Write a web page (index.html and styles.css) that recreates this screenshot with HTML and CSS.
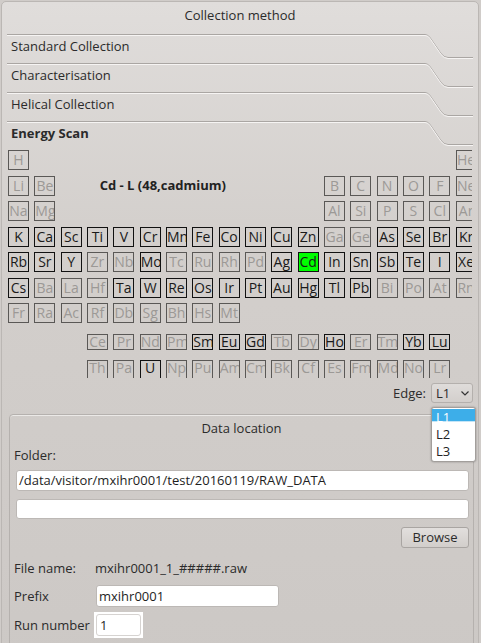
FILE: index.html
```html
<!DOCTYPE html>
<html>
<head>
<meta charset="utf-8">
<link rel="stylesheet" href="styles.css">
</head>
<body>
<div class="frame">
  <div class="frame-title">Collection method</div>

  <div class="tb-head">
    <svg class="tab-line" width="466" height="26" viewBox="0 0 466 26"><path class="tl-dark" d="M0 0.5 H418 Q421 0.5 423 3.5 L434 19.5 Q437 23.5 441 23.5 H466"/><path class="tl-light" d="M0 1.5 H418 Q421 1.5 423 4.5 L434 20.5 Q437 24.5 441 24.5 H466"/></svg>
    <span>Standard Collection</span>
  </div>
  <div class="tb-head">
    <svg class="tab-line" width="466" height="26" viewBox="0 0 466 26"><path class="tl-dark" d="M0 0.5 H418 Q421 0.5 423 3.5 L434 19.5 Q437 23.5 441 23.5 H466"/><path class="tl-light" d="M0 1.5 H418 Q421 1.5 423 4.5 L434 20.5 Q437 24.5 441 24.5 H466"/></svg>
    <span>Characterisation</span>
  </div>
  <div class="tb-head">
    <svg class="tab-line" width="466" height="26" viewBox="0 0 466 26"><path class="tl-dark" d="M0 0.5 H418 Q421 0.5 423 3.5 L434 19.5 Q437 23.5 441 23.5 H466"/><path class="tl-light" d="M0 1.5 H418 Q421 1.5 423 4.5 L434 20.5 Q437 24.5 441 24.5 H466"/></svg>
    <span>Helical Collection</span>
  </div>
  <div class="tb-head current">
    <svg class="tab-line" width="466" height="26" viewBox="0 0 466 26"><path class="tl-dark" d="M0 0.5 H418 Q421 0.5 423 3.5 L434 19.5 Q437 23.5 441 23.5 H466"/><path class="tl-light" d="M0 1.5 H418 Q421 1.5 423 4.5 L434 20.5 Q437 24.5 441 24.5 H466"/></svg>
    <span>Energy Scan</span>
  </div>

  <div class="page">
    <div class="ptable">
      <div class="el off">H</div>
      <div class="el off c18">He</div>

      <div class="el off">Li</div>
      <div class="el off">Be</div>
      <div class="info">Cd - L (48,cadmium)</div>
      <div class="el off">B</div>
      <div class="el off">C</div>
      <div class="el off">N</div>
      <div class="el off">O</div>
      <div class="el off">F</div>
      <div class="el off">Ne</div>

      <div class="el off">Na</div>
      <div class="el off">Mg</div>
      <div class="el off c13">Al</div>
      <div class="el off">Si</div>
      <div class="el off">P</div>
      <div class="el off">S</div>
      <div class="el off">Cl</div>
      <div class="el off">Ar</div>

      <div class="el">K</div>
      <div class="el">Ca</div>
      <div class="el">Sc</div>
      <div class="el">Ti</div>
      <div class="el">V</div>
      <div class="el">Cr</div>
      <div class="el">Mn</div>
      <div class="el">Fe</div>
      <div class="el">Co</div>
      <div class="el">Ni</div>
      <div class="el">Cu</div>
      <div class="el">Zn</div>
      <div class="el off">Ga</div>
      <div class="el off">Ge</div>
      <div class="el">As</div>
      <div class="el">Se</div>
      <div class="el">Br</div>
      <div class="el">Kr</div>

      <div class="el">Rb</div>
      <div class="el">Sr</div>
      <div class="el">Y</div>
      <div class="el off">Zr</div>
      <div class="el off">Nb</div>
      <div class="el">Mo</div>
      <div class="el off">Tc</div>
      <div class="el off">Ru</div>
      <div class="el off">Rh</div>
      <div class="el off">Pd</div>
      <div class="el">Ag</div>
      <div class="el sel">Cd</div>
      <div class="el">In</div>
      <div class="el">Sn</div>
      <div class="el">Sb</div>
      <div class="el">Te</div>
      <div class="el">I</div>
      <div class="el">Xe</div>

      <div class="el">Cs</div>
      <div class="el off">Ba</div>
      <div class="el off">La</div>
      <div class="el off">Hf</div>
      <div class="el">Ta</div>
      <div class="el">W</div>
      <div class="el">Re</div>
      <div class="el">Os</div>
      <div class="el">Ir</div>
      <div class="el">Pt</div>
      <div class="el">Au</div>
      <div class="el">Hg</div>
      <div class="el">Tl</div>
      <div class="el">Pb</div>
      <div class="el off">Bi</div>
      <div class="el off">Po</div>
      <div class="el off">At</div>
      <div class="el off">Rn</div>

      <div class="el off">Fr</div>
      <div class="el off">Ra</div>
      <div class="el off">Ac</div>
      <div class="el off">Rf</div>
      <div class="el off">Db</div>
      <div class="el off">Sg</div>
      <div class="el off">Bh</div>
      <div class="el off">Hs</div>
      <div class="el off">Mt</div>
    </div>

    <div class="ltable-clip">
      <div class="ltable">
        <div class="el off c4">Ce</div>
        <div class="el off">Pr</div>
        <div class="el off">Nd</div>
        <div class="el off">Pm</div>
        <div class="el">Sm</div>
        <div class="el">Eu</div>
        <div class="el">Gd</div>
        <div class="el off">Tb</div>
        <div class="el off">Dy</div>
        <div class="el">Ho</div>
        <div class="el off">Er</div>
        <div class="el off">Tm</div>
        <div class="el">Yb</div>
        <div class="el">Lu</div>

        <div class="el off c4">Th</div>
        <div class="el off">Pa</div>
        <div class="el">U</div>
        <div class="el off">Np</div>
        <div class="el off">Pu</div>
        <div class="el off">Am</div>
        <div class="el off">Cm</div>
        <div class="el off">Bk</div>
        <div class="el off">Cf</div>
        <div class="el off">Es</div>
        <div class="el off">Fm</div>
        <div class="el off">Md</div>
        <div class="el off">No</div>
        <div class="el off">Lr</div>
      </div>
    </div>

    <div class="edge-row">
      <span class="edge-label">Edge:</span>
      <div class="combo-wrap">
        <div class="combo">
          <span>L1</span>
          <svg class="chev" width="8" height="5" viewBox="0 0 8 5"><path d="M0.5 0.5 L4 4 L7.5 0.5"/></svg>
        </div>
        <div class="popup">
          <div class="pop-item hl">L1</div>
          <div class="pop-item">L2</div>
          <div class="pop-item">L3</div>
        </div>
      </div>
    </div>

    <div class="databox">
      <div class="db-title">Data location</div>
      <div class="db-label">Folder:</div>
      <div class="field f1">/data/visitor/mxihr0001/test/20160119/RAW_DATA</div>
      <div class="field f2"></div>
      <div class="btn">Browse</div>
      <div class="row r-file"><span class="lbl">File name:</span><span class="fname">mxihr0001_1_#####.raw</span></div>
      <div class="row r-prefix"><span class="lbl">Prefix</span><div class="field prefix">mxihr0001</div></div>
      <div class="row r-run"><span class="lbl">Run number</span><div class="run-wrap"><div class="field run">1</div></div></div>
    </div>
  </div>
</div>
</body>
</html>
```

FILE: styles.css
```css
* { box-sizing: border-box; margin: 0; padding: 0; }
html, body { height: 100%; }
body {
  background: #d0ccc9;
  font-family: "Open Sans", "Noto Sans", sans-serif;
  font-size: 13px;
  color: #2b2b2b;
  overflow: hidden;
}
.frame {
  margin: 1px 0 0 1px;
  width: 478px;
  height: 680px;
  border: 1px solid #bbb7b4;
  border-radius: 5px;
  background: linear-gradient(#e0dddb, #d3cfcc 35%, #ccc8c5 100%);
}
.frame-title {
  height: 32px;
  line-height: 26px;
  text-align: center;
}
.tb-head {
  position: relative;
  height: 29px;
  padding: 3px 0 0 9px;
  line-height: 18px;
}
.tb-head.current { font-weight: bold; }
.tab-line { position: absolute; left: 5px; top: 0; }
.tl-dark { fill: none; stroke: #aaa6a3; stroke-width: 1; }
.tl-light { fill: none; stroke: #f6f4f3; stroke-width: 1; }

.page { padding-left: 6px; }

.ptable {
  width: 464px;
  height: 173px;
  overflow: hidden;
  display: grid;
  grid-template-columns: repeat(18, 21px);
  grid-template-rows: repeat(7, 20px);
  column-gap: 5.33px;
  row-gap: 5.5px;
}
.el {
  width: 21px;
  height: 20px;
  border: 1px solid #111;
  color: #1a1a1a;
  font-size: 14px;
  line-height: 18px;
  white-space: nowrap;
  overflow: hidden;
  display: flex;
  justify-content: safe center;
}
.el.off { border-color: #5a5856; color: #9c9996; }
.el.sel { background: #00ff00; }
.c4 { grid-column-start: 4; }
.c13 { grid-column-start: 13; }
.c18 { grid-column-start: 18; }
.info {
  grid-column: 3 / 13;
  padding-left: 39px;
  font-weight: bold;
  font-size: 13px;
  line-height: 18px;
  color: #222;
  white-space: nowrap;
  align-self: start;
}
.ltable-clip {
  margin-top: 11px;
  width: 464px;
  height: 44px;
  overflow: hidden;
}
.ltable {
  display: grid;
  grid-template-columns: repeat(18, 21px);
  grid-template-rows: 16px 20px;
  column-gap: 5.33px;
  row-gap: 10px;
}
.ltable .el { height: 100%; line-height: 14px; }

.edge-row {
  margin-top: 5px;
  height: 20px;
  display: flex;
  justify-content: flex-end;
  align-items: center;
  gap: 5px;
  padding-right: 5px;
}
.edge-label { line-height: 18px; }
.combo-wrap { position: relative; }
.combo {
  width: 42px;
  height: 20px;
  border: 1px solid #b4b0ad;
  border-radius: 3px;
  background: linear-gradient(#dfdcda, #d3cfcc);
  display: flex;
  align-items: center;
  justify-content: space-between;
  padding: 0 3px 0 4px;
  line-height: 18px;
}
.chev path { fill: none; stroke: #333; stroke-width: 1.2; }
.popup {
  position: absolute;
  left: 0;
  top: 24px;
  width: 45px;
  height: 55px;
  background: #fff;
  border: 1px solid #a29e9b;
  border-radius: 3px;
  box-shadow: 0 0 2px rgba(0,0,0,0.35);
  padding-top: 1px;
  z-index: 2;
}
.pop-item {
  height: 17px;
  line-height: 17px;
  padding-left: 4px;
  color: #222;
}
.pop-item.hl {
  color: #fff;
  background: linear-gradient(#3daee9 0 12px, #c4e5f7 12px 13px, #fff 13px);
}

.databox {
  margin: 11px 4px 0 1px;
  border: 1px solid #b5b1ae;
  border-radius: 4px;
  box-shadow: inset 0 1px 0 #ebe9e7;
  padding: 0 4px 40px 4px;
  display: flex;
  flex-direction: column;
}
.db-title { height: 26px; line-height: 26px; text-align: center; }
.db-label { margin-top: 5px; line-height: 18px; }
.field {
  background: #fff;
  border: 1px solid #bcb8b5;
  border-radius: 3px;
  padding-left: 2px;
  line-height: 19px;
  color: #1e1e1e;
  white-space: nowrap;
  overflow: hidden;
}
.f1 { margin: 6px 0 0 2px; height: 21px; }
.f2 { margin: 8px 0 0 2px; height: 20px; }
.btn {
  margin-top: 8px;
  align-self: flex-end;
  width: 68px;
  height: 21px;
  border: 1px solid #a9a5a2;
  border-radius: 3px;
  background: linear-gradient(#e2dfdd, #d2cecb);
  text-align: center;
  line-height: 19px;
}
.row { display: flex; align-items: center; }
.lbl { width: 80px; flex: none; line-height: 18px; white-space: nowrap; }
.r-file { margin-top: 11px; height: 18px; }
.fname { margin-left: 1px; line-height: 18px; }
.r-prefix { margin-top: 8px; height: 22px; }
.prefix { margin-left: 2px; width: 183px; height: 22px; line-height: 20px; }
.r-run { margin-top: 5px; height: 26px; }
.run-wrap { width: 49px; height: 26px; background: #fff; padding: 2px; }
.run { height: 22px; border-color: #d6d3d1; line-height: 20px; padding-left: 3px; }
```
